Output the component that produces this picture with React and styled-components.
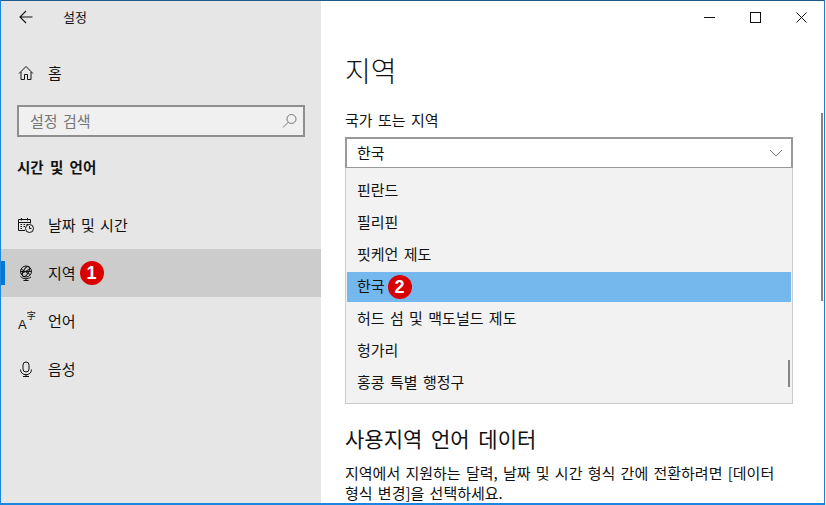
import React from "react";
import styled, { createGlobalStyle } from "styled-components";

const GlobalStyle = createGlobalStyle`
  html, body {
    margin: 0;
    padding: 0;
    background: #fff;
    overflow: hidden;
  }
  * {
    box-sizing: border-box;
  }
`;

const Frame = styled.div`
  display: flex;
  width: 825px;
  height: 505px;
  overflow: hidden;
  border-top: 1px solid #1b5c8e;
  border-left: 1px solid #1a86e0;
  border-right: 1px solid #2a7cc4;
  border-bottom: 2px solid #1a86e0;
  font-family: "Noto Sans CJK KR", "Noto Sans", sans-serif;
  font-size: 15px;
  color: #111;
`;

const Sidebar = styled.aside`
  width: 320px;
  flex-shrink: 0;
  display: flex;
  flex-direction: column;
  background: #e6e6e6;
`;

const TitleBar = styled.div`
  display: flex;
  align-items: center;
  height: 32px;
  padding-left: 18px;
  font-size: 13px;
`;

const BackIcon = styled.svg`
  width: 14px;
  height: 14px;
  margin-right: 30px;
`;

const Label = styled.span`
  margin-bottom: 2px;
`;

const NavRow = styled.div`
  position: relative;
  display: flex;
  align-items: center;
  height: 48px;
  padding-left: 17px;
  word-spacing: 2px;
  background: ${(p) => (p.$active ? "#cccccc" : "transparent")};

  &::before {
    content: "";
    display: ${(p) => (p.$active ? "block" : "none")};
    position: absolute;
    left: 0;
    top: 12px;
    width: 4px;
    height: 24px;
    background: #0078d7;
  }
`;

const HomeRow = styled(NavRow)`
  margin-top: 16px;
`;

const IconSlot = styled.span`
  display: flex;
  align-items: center;
  justify-content: center;
  width: 16px;
  height: 16px;
  margin-right: 14px;
  flex-shrink: 0;
`;

const SearchBox = styled.div`
  display: flex;
  align-items: center;
  justify-content: space-between;
  width: 288px;
  height: 32px;
  margin: 8px 0 0 16px;
  padding: 0 5px 0 11px;
  background: #f0f0f0;
  border: 2px solid #8f8f8f;
  color: #767676;
  word-spacing: 2px;
`;

const SectionTitle = styled.div`
  margin: 18px 0 22px 16px;
  line-height: 24px;
  font-weight: 700;
  font-size: 14.5px;
  word-spacing: 3px;
`;

const LangGlyph = styled.span`
  display: flex;
  width: 16px;
  height: 16px;
  color: #111;
`;

const LangLatin = styled.span`
  align-self: flex-end;
  margin-bottom: -2px;
  font-family: "Liberation Sans", sans-serif;
  font-size: 13px;
  line-height: 12px;
`;

const LangHan = styled.span`
  margin-top: -2px;
  font-family: "Noto Sans CJK SC", sans-serif;
  font-size: 9px;
  line-height: 10px;
`;

const Badge = styled.span`
  display: inline-flex;
  align-items: center;
  justify-content: center;
  width: 24px;
  height: 24px;
  margin-left: ${(p) => p.$gap}px;
  border-radius: 50%;
  background: #d90000;
  color: #fff;
  font-family: "Liberation Sans", sans-serif;
  font-weight: 700;
  font-size: 18px;
`;

const Main = styled.main`
  position: relative;
  flex: 1;
  padding-left: 24px;
  background: #fff;
`;

const CaptionBar = styled.div`
  display: flex;
  justify-content: flex-end;
  height: 32px;
  margin-left: -24px;
`;

const CaptionButton = styled.span`
  display: flex;
  align-items: center;
  justify-content: center;
  width: 46px;
  height: 32px;
`;

const PageScroll = styled.div`
  position: absolute;
  right: 1px;
  top: 112px;
  width: 2px;
  height: 188px;
  background: #858585;
`;

const PageTitle = styled.h1`
  margin: 17px 0 0;
  font-size: 28px;
  line-height: 40px;
  font-weight: 300;
`;

const FieldLabel = styled.div`
  margin-top: 20px;
  line-height: 20px;
  word-spacing: 2px;
`;

const Combo = styled.div`
  display: flex;
  align-items: center;
  justify-content: space-between;
  width: 448px;
  height: 31px;
  margin-top: 7px;
  padding: 0 8px 0 10px;
  background: #fff;
  border: 2px solid #999;
  border-bottom-width: 1px;
`;

const Popup = styled.div`
  position: relative;
  width: 448px;
  height: 236px;
  padding: 7px 1px 0;
  background: #f2f2f2;
  border: 1px solid #cccccc;
  border-top: 0;
`;

const Option = styled.div`
  display: flex;
  align-items: center;
  height: 30px;
  margin: 1px 0 2px;
  padding-left: 10px;
  word-spacing: 2px;
  background: ${(p) => (p.$selected ? "#74b8ee" : "transparent")};
`;

const OptionLabel = styled.span`
  margin-bottom: 3px;
`;

const PopupScroll = styled.div`
  position: absolute;
  right: 2px;
  top: 192px;
  width: 2px;
  height: 27px;
  background: #858585;
`;

const SubTitle = styled.h2`
  margin: 19px 0 0;
  font-size: 21px;
  line-height: 30px;
  font-weight: 400;
  word-spacing: 4px;
`;

const Description = styled.p`
  margin: 10px 0 0;
  width: 438px;
  line-height: 20px;
  word-spacing: 1.9px;
`;

const Stroke = styled.svg`
  fill: none;
  stroke: ${(p) => p.$color || "#111"};
  stroke-width: 1;
  flex-shrink: 0;
`;

const countries = [
  { name: "핀란드" },
  { name: "필리핀" },
  { name: "핏케언 제도" },
  { name: "한국", selected: true },
  { name: "허드 섬 및 맥도널드 제도" },
  { name: "헝가리" },
  { name: "홍콩 특별 행정구" },
];

const App = () => {
  return (
    <>
      <GlobalStyle />
      <Frame>
        <Sidebar>
          <TitleBar>
            <BackIcon viewBox="0 0 14 14" fill="none" stroke="#111" strokeWidth="1.1">
              <path d="M1 7h12.5M7 1 1 7l6 6" />
            </BackIcon>
            <Label>설정</Label>
          </TitleBar>

          <HomeRow>
            <IconSlot>
              <Stroke width="16" height="16" viewBox="0 0 16 16">
                <path d="M1 8.5 8 1.5l7 7M3 7v7.5h3.5V9.5h3v5H13V7" />
              </Stroke>
            </IconSlot>
            <Label>홈</Label>
          </HomeRow>

          <SearchBox>
            <Label>설정 검색</Label>
            <Stroke width="16" height="16" viewBox="0 0 16 16" $color="#767676">
              <circle cx="9.5" cy="6" r="4.5" />
              <path d="M6.3 9.2 1 14.5" />
            </Stroke>
          </SearchBox>

          <SectionTitle>시간 및 언어</SectionTitle>

          <NavRow>
            <IconSlot>
              <Stroke width="16" height="16" viewBox="0 0 16 16">
                <path d="M7 13.5H.5v-11h12v4M.5 5.5h12M3.5 1v2.5M9.5 1v2.5" />
                <path d="M2.5 7.5h1.5M5.5 7.5h1.5M8.5 7.5h1.5M2.5 9.5h1.5M5.5 9.5h1.5M2.5 11.5h1.5" strokeWidth="1.2" />
                <circle cx="11.5" cy="11.5" r="4" />
                <path d="M11.5 9v2.5h2" />
              </Stroke>
            </IconSlot>
            <Label>날짜 및 시간</Label>
          </NavRow>

          <NavRow $active>
            <IconSlot>
              <Stroke width="16" height="16" viewBox="0 0 16 16">
                <circle cx="8" cy="6.5" r="5.5" />
                <ellipse cx="8" cy="6.5" rx="2.5" ry="5.5" transform="rotate(30 8 6.5)" />
                <path d="M3 4 12 9.5M3 9 12.5 3.5M2.5 6.5h11" />
                <path d="M2.5 11.5c2.5 2.6 7 3 10.5 .5M8 13.5v2M5.5 15.5h5" />
              </Stroke>
            </IconSlot>
            <Label>지역</Label>
            <Badge $gap={4}>1</Badge>
          </NavRow>

          <NavRow>
            <IconSlot>
              <LangGlyph>
                <LangLatin>A</LangLatin>
                <LangHan>字</LangHan>
              </LangGlyph>
            </IconSlot>
            <Label>언어</Label>
          </NavRow>

          <NavRow>
            <IconSlot>
              <Stroke width="16" height="16" viewBox="0 0 16 16">
                <rect x="5" y="1" width="6" height="10" rx="3" />
                <path d="M2.5 8.5c0 7 11 7 11 0M8 13v2.5M5 15.5h6" />
              </Stroke>
            </IconSlot>
            <Label>음성</Label>
          </NavRow>
        </Sidebar>

        <Main>
          <CaptionBar>
            <CaptionButton>
              <Stroke width="11" height="11" viewBox="0 0 11 11">
                <path d="M0 5.5h11" />
              </Stroke>
            </CaptionButton>
            <CaptionButton>
              <Stroke width="11" height="11" viewBox="0 0 11 11">
                <rect x=".5" y=".5" width="10" height="10" />
              </Stroke>
            </CaptionButton>
            <CaptionButton>
              <Stroke width="11" height="11" viewBox="0 0 11 11">
                <path d="M.5.5l10 10M10.5.5l-10 10" />
              </Stroke>
            </CaptionButton>
          </CaptionBar>
          <PageScroll />

          <PageTitle>지역</PageTitle>
          <FieldLabel>국가 또는 지역</FieldLabel>
          <Combo>
            <Label>한국</Label>
            <Stroke width="14" height="8" viewBox="0 0 14 8" $color="#767676">
              <path d="M1 1l6 6 6-6" />
            </Stroke>
          </Combo>
          <Popup>
            {countries.map((c) => (
              <Option key={c.name} $selected={c.selected}>
                <OptionLabel>{c.name}</OptionLabel>
                {c.selected && <Badge $gap={3}>2</Badge>}
              </Option>
            ))}
            <PopupScroll />
          </Popup>

          <SubTitle>사용지역 언어 데이터</SubTitle>
          <Description>
            지역에서 지원하는 달력, 날짜 및 시간 형식 간에 전환하려면 [데이터 형식 변경]을 선택하세요.
          </Description>
        </Main>
      </Frame>
    </>
  );
};

export default App;
